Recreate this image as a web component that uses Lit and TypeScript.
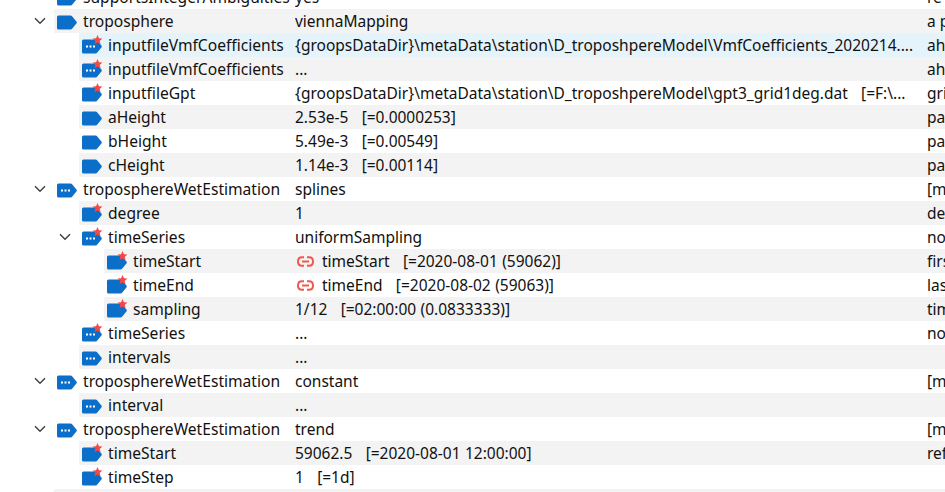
import { LitElement, html, css, svg } from "lit";
import { customElement } from "lit/decorators.js";

type Row = { n: string; v?: string; c?: string; lvl: number; dots?: boolean; star?: boolean; open?: boolean; link?: boolean; sel?: boolean; noIcon?: boolean };

const rows: Row[] = [
  { n: "supportsIntegerAmbiguities", v: "yes", c: "re", lvl: 0 },
  { n: "troposphere", v: "viennaMapping", c: "a p", lvl: 0, open: true },
  { n: "inputfileVmfCoefficients", v: "{groopsDataDir}\\metaData\\station\\D_troposhpereModel\\VmfCoefficients_2020214....", c: "ah", lvl: 1, dots: true, star: true, sel: true },
  { n: "inputfileVmfCoefficients", v: "...", c: "ah", lvl: 1, dots: true, star: true },
  { n: "inputfileGpt", v: "{groopsDataDir}\\metaData\\station\\D_troposhpereModel\\gpt3_grid1deg.dat   [=F:\\...", c: "gri", lvl: 1, star: true },
  { n: "aHeight", v: "2.53e-5   [=0.0000253]", c: "pa", lvl: 1 },
  { n: "bHeight", v: "5.49e-3   [=0.00549]", c: "pa", lvl: 1 },
  { n: "cHeight", v: "1.14e-3   [=0.00114]", c: "pa", lvl: 1 },
  { n: "troposphereWetEstimation", v: "splines", c: "[m", lvl: 0, dots: true, open: true },
  { n: "degree", v: "1", c: "de", lvl: 1, star: true },
  { n: "timeSeries", v: "uniformSampling", c: "no", lvl: 1, dots: true, star: true, open: true },
  { n: "timeStart", v: "timeStart   [=2020-08-01 (59062)]", c: "firs", lvl: 2, star: true, link: true },
  { n: "timeEnd", v: "timeEnd   [=2020-08-02 (59063)]", c: "las", lvl: 2, star: true, link: true },
  { n: "sampling", v: "1/12   [=02:00:00 (0.0833333)]", c: "tim", lvl: 2, star: true },
  { n: "timeSeries", v: "...", c: "no", lvl: 1, dots: true, star: true },
  { n: "intervals", v: "...", lvl: 1, dots: true },
  { n: "troposphereWetEstimation", v: "constant", c: "[m", lvl: 0, dots: true, open: true },
  { n: "interval", v: "...", lvl: 1, dots: true },
  { n: "troposphereWetEstimation", v: "trend", c: "[m", lvl: 0, dots: true, open: true },
  { n: "timeStart", v: "59062.5   [=2020-08-01 12:00:00]", c: "ref", lvl: 1, star: true },
  { n: "timeStep", v: "1   [=1d]", lvl: 1, star: true },
  { n: "", lvl: 0, noIcon: true },
];

const tag = (r: Row) => html`<svg class="icon" width="24" height="20" viewBox="0 0 24 20">
  <path d="M4.5 4.5H16.5Q17.6 4.5 18.3 5.4L22.6 10.7Q23.1 11.5 22.6 12.3L18.3 17.6Q17.6 18.5 16.5 18.5H4.5Q3 18.5 3 17V6Q3 4.5 4.5 4.5Z" fill="#0b6ec8"/>
  ${r.dots ? svg`<g fill="#fff"><rect x="7" y="10.5" width="2" height="2"/><rect x="10.5" y="10.5" width="2" height="2"/><rect x="14" y="10.5" width="2" height="2"/></g>` : ""}
  ${r.star ? svg`<path d="M18.5 0L19.9 3.3L23.4 3.6L20.7 5.9L21.5 9.3L18.5 7.5L15.5 9.3L16.3 5.9L13.6 3.6L17.1 3.3Z" fill="#f44747"/>` : ""}
</svg>`;

const chev = html`<svg class="chev" width="12" height="8" viewBox="0 0 12 8"><path d="M1 1.2L6 6.2L11 1.2" fill="none" stroke="#424242" stroke-width="1.5"/></svg>`;

const link = html`<svg class="link" width="17" height="11" viewBox="0 0 17 11" fill="none" stroke="#f1564f" stroke-width="2">
  <path d="M7 1.2H5Q1 1.2 1 5.5T5 9.8H7"/><path d="M10 1.2H12Q16 1.2 16 5.5T12 9.8H10"/><path d="M5 5.5H12"/></svg>`;

@customElement("app-root")
export class AppRoot extends LitElement {
  static styles = css`
    :host { display: block; width: 945px; height: 492px; overflow: hidden; background: #fff;
      font-family: "Noto Sans", "Open Sans", sans-serif; font-size: 15.5px; color: #111; }
    .tree { margin-top: -15px; }
    .row { display: flex; height: 24px; }
    .gutter { flex: none; display: flex; justify-content: flex-end; align-items: center; }
    .gutter .chev { margin-right: 8px; }
    .lvl0 .gutter { width: 54px; }
    .lvl1 .gutter { width: 79px; }
    .lvl2 .gutter { width: 104px; }
    .body { flex: 1; min-width: 0; display: flex; align-items: center; white-space: pre; }
    .row:nth-child(even) .body { background: #f3f3f3; }
    .row.sel .body { background: #e5f3fb; }
    .name { flex: 1; min-width: 0; display: flex; align-items: center; height: 24px; }
    .icon { flex: none; margin-right: 5px; }
    .label { line-height: 24px; font-size: 15.6px; }
    .val { flex: none; width: 632px; display: flex; align-items: center; overflow: hidden; word-spacing: 0.4px; }
    .link { flex: none; margin: 0 8px 0 2px; }
    .com { flex: none; width: 18px; overflow: hidden; }
  `;
  render() {
    return html`<div class="tree">
      ${rows.map(r => html`<div class="row lvl${r.lvl} ${r.sel ? "sel" : ""}">
        <div class="gutter">${r.open ? chev : ""}</div>
        <div class="body">
          <div class="name">${r.noIcon ? "" : tag(r)}<span class="label">${r.n}</span></div>
          <div class="val">${r.link ? link : ""}<span>${r.v ?? ""}</span></div>
          <div class="com">${r.c ?? ""}</div>
        </div>
      </div>`)}
    </div>`;
  }
}
